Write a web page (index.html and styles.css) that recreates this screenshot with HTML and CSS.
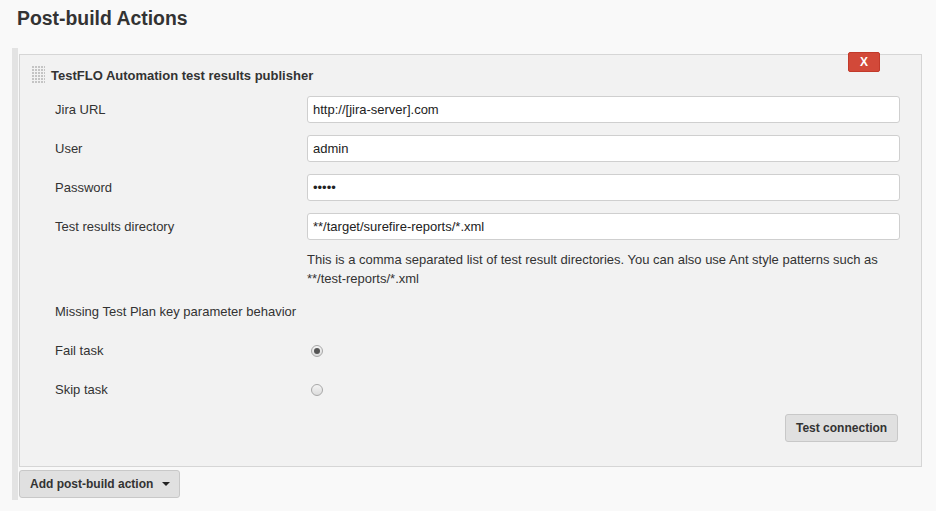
FILE: index.html
```html
<!DOCTYPE html>
<html>
<head>
<meta charset="utf-8">
<link rel="stylesheet" href="styles.css">
</head>
<body>
<h1 class="page-title">Post-build Actions</h1>
<div class="actions">
  <div class="publisher">
    <button class="delete-btn">X</button>
    <div class="pub-header">
      <svg class="handle" width="13" height="18" viewBox="0 0 13 18">
        <defs>
          <pattern id="dots" width="3" height="3" patternUnits="userSpaceOnUse">
            <rect width="2" height="2" fill="#c4c4c4"/>
          </pattern>
        </defs>
        <rect width="13" height="18" fill="url(#dots)"/>
      </svg>
      <span class="pub-title">TestFLO Automation test results publisher</span>
    </div>
    <div class="row">
      <label class="label">Jira URL</label>
      <input class="field" type="text" value="http://[jira-server].com">
    </div>
    <div class="row">
      <label class="label">User</label>
      <input class="field" type="text" value="admin">
    </div>
    <div class="row">
      <label class="label">Password</label>
      <input class="field" type="password" value="admin">
    </div>
    <div class="row">
      <label class="label">Test results directory</label>
      <input class="field" type="text" value="**/target/surefire-reports/*.xml">
    </div>
    <div class="help">This is a comma separated list of test result directories. You can also use Ant style patterns such as **/test-reports/*.xml</div>
    <div class="row">
      <span class="label wide">Missing Test Plan key parameter behavior</span>
    </div>
    <div class="row">
      <span class="label">Fail task</span>
      <span class="radio checked"></span>
    </div>
    <div class="row">
      <span class="label">Skip task</span>
      <span class="radio"></span>
    </div>
    <div class="btn-row">
      <button class="btn">Test connection</button>
    </div>
  </div>
  <button class="btn add-btn">Add post-build action <span class="caret"></span></button>
</div>
</body>
</html>
```
FILE: styles.css
```css
html, body {
  margin: 0;
  padding: 0;
}
body {
  background: #f9f9f9;
  font-family: "Liberation Sans", Arial, sans-serif;
  font-size: 13px;
  color: #333;
}
.page-title {
  margin: 0;
  padding: 6px 0 0 17px;
  height: 48px;
  box-sizing: border-box;
  font-size: 19.4px;
  line-height: 24px;
  font-weight: bold;
  color: #333;
}
.actions {
  margin-left: 12px;
  width: 910px;
  border-left: 6px solid #e3e3e3;
  padding: 6px 0 2px 1px;
  box-sizing: border-box;
}
.publisher {
  position: relative;
  background: #f2f2f2;
  border: 1px solid #d6d6d6;
  padding: 10px 21px 24px 12px;
}
.delete-btn {
  position: absolute;
  top: -3px;
  right: 41px;
  width: 32px;
  height: 20px;
  background: #d24939;
  border: 1px solid #c23a2b;
  border-radius: 2px;
  color: #fff;
  font-family: "Liberation Sans", Arial, sans-serif;
  font-size: 12px;
  font-weight: bold;
  padding: 0;
  line-height: 17px;
}
.pub-header {
  display: flex;
  align-items: center;
  height: 20px;
  margin-bottom: 5px;
}
.handle {
  display: block;
  margin-right: 6px;
}
.pub-title {
  font-weight: bold;
  font-size: 13px;
}
.row {
  display: flex;
  align-items: center;
  height: 39px;
}
.label {
  width: 275px;
  flex: none;
  padding-left: 23px;
  box-sizing: border-box;
}
.label.wide {
  width: auto;
}
.field {
  flex: 1;
  min-width: 0;
  height: 27px;
  box-sizing: border-box;
  border: 1px solid #cfcfcf;
  border-radius: 3px;
  background: #fff;
  padding: 0 5px;
  font-family: "Liberation Sans", Arial, sans-serif;
  font-size: 13px;
  color: #222;
  margin: 0;
}
.help {
  margin: 4px 0 4px 275px;
  line-height: 19px;
}
.radio {
  width: 12px;
  height: 12px;
  box-sizing: border-box;
  border: 1px solid #a8a8a8;
  border-radius: 50%;
  background: linear-gradient(#f4f4f4, #dcdcdc);
  margin-left: 4px;
  position: relative;
}
.radio.checked::after {
  content: "";
  position: absolute;
  left: 2px;
  top: 2px;
  width: 6px;
  height: 6px;
  border-radius: 50%;
  background: #555;
}
.btn-row {
  display: flex;
  justify-content: flex-end;
  margin-top: 5px;
  padding-right: 2px;
}
.btn {
  height: 28px;
  box-sizing: border-box;
  background: #e0e0e0;
  border: 1px solid #c8c8c8;
  border-radius: 3px;
  color: #333;
  font-family: "Liberation Sans", Arial, sans-serif;
  font-size: 12px;
  font-weight: bold;
  padding: 0 10px;
  white-space: nowrap;
}
.btn-row .btn {
  width: 113px;
}
.add-btn {
  margin-top: 3px;
  width: 161px;
  text-align: left;
  padding-left: 10px;
  display: flex;
  align-items: center;
}
.caret {
  display: inline-block;
  width: 0;
  height: 0;
  border-left: 4px solid transparent;
  border-right: 4px solid transparent;
  border-top: 4px solid #222;
  margin-left: 9px;
}
```
